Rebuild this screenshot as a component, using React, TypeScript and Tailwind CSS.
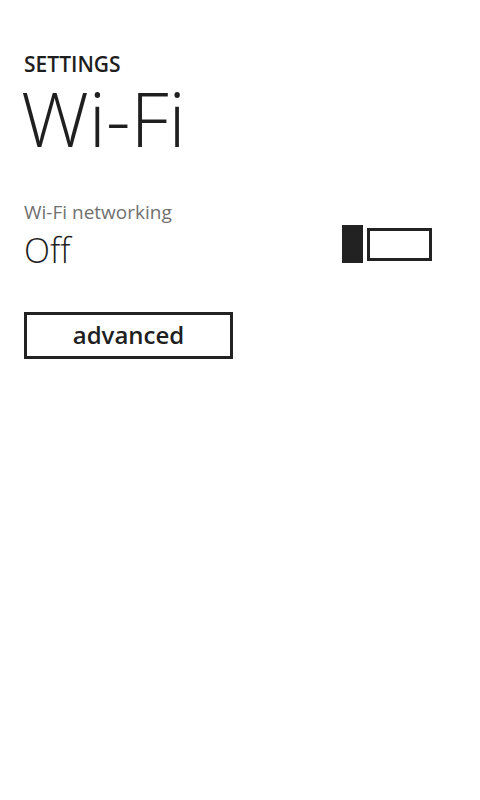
export default function App() {
  return (
    <div className="w-[480px] h-[800px] bg-white text-[#1f1f1f] overflow-hidden" style={{ fontFamily: '"Open Sans", "Noto Sans", sans-serif' }}>
      <div className="pl-[24px] pt-[50px]">
        <div className="text-[21px] leading-[28px] font-semibold">SETTINGS</div>
        <div className="text-[76px] leading-[80px] font-light -ml-[3px]">Wi-Fi</div>
        <div className="mt-[41px] flex items-start">
          <div className="w-[318px] flex flex-col">
            <div className="text-[19px] leading-[26px] text-[#707070]">Wi-Fi networking</div>
            <div className="text-[34px] leading-[40px] font-light mt-[5px]">Off</div>
          </div>
          <div className="mt-[26px] flex items-center gap-[4px]">
            <div className="w-[21px] h-[38px] bg-[#222]" />
            <div className="w-[65px] h-[33px] border-[3px] border-[#222]" />
          </div>
        </div>
        <div className="mt-[42px] w-[209px] h-[47px] border-[3px] border-[#222] flex items-center justify-center">
          <span className="text-[24px] font-semibold leading-none -mt-[2px]">advanced</span>
        </div>
      </div>
    </div>
  );
}
